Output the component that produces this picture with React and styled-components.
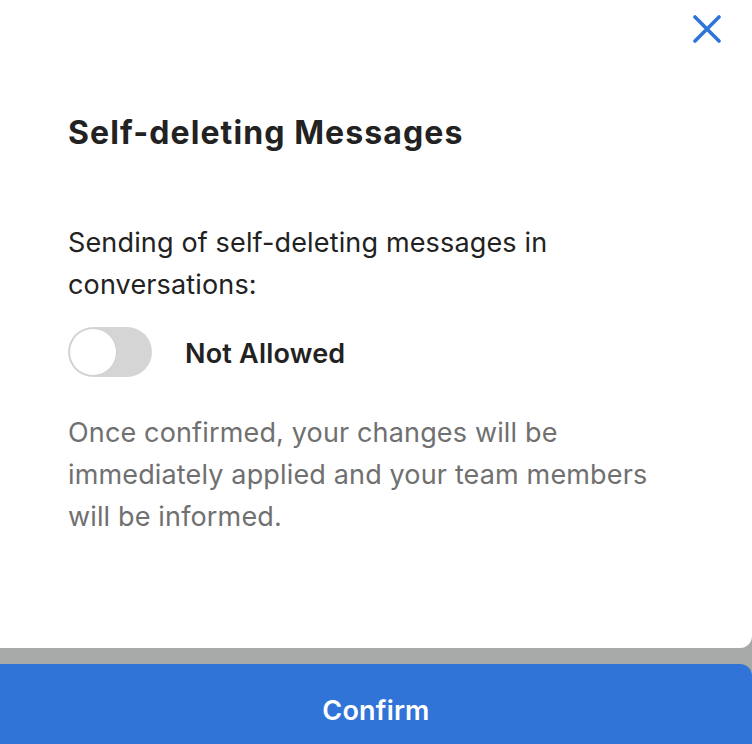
import React from "react";
import styled, { createGlobalStyle } from "styled-components";

const Global = createGlobalStyle`
  html, body { margin: 0; padding: 0; }
  body {
    background: #a7a9a8;
    overflow: hidden;
    font-family: Inter, "Noto Sans", sans-serif;
    font-optical-sizing: none;
    -webkit-font-smoothing: antialiased;
  }
`;

const Page = styled.div`
  width: 752px;
  height: 744px;
  display: flex;
  flex-direction: column;
  overflow: hidden;
`;

const Panel = styled.div`
  background: #ffffff;
  height: 648px;
  box-sizing: border-box;
  flex-shrink: 0;
  border-bottom-right-radius: 12px;
  padding: 15px 31px 0 68px;
  display: flex;
  flex-direction: column;
`;

const CloseRow = styled.div`
  display: flex;
  justify-content: flex-end;
`;

const CloseButton = styled.button`
  width: 28px;
  height: 28px;
  padding: 0;
  border: none;
  background: none;
  display: flex;
  cursor: pointer;
`;

const Title = styled.h1`
  margin: 71px 0 0;
  font-size: 32px;
  line-height: 38px;
  font-weight: 650;
  letter-spacing: 1.1px;
  color: #222222;
`;

const Body = styled.p`
  margin: ${(p) => p.$top}px 0 0;
  font-size: 27px;
  line-height: 42px;
  font-weight: 400;
  letter-spacing: 0.15px;
  color: ${(p) => (p.$muted ? "#707070" : "#222222")};
  max-width: 600px;
`;

const ToggleRow = styled.div`
  margin-top: 21px;
  display: flex;
  align-items: center;
  gap: 33px;
`;

const Track = styled.div`
  width: 84px;
  height: 50px;
  border-radius: 25px;
  background: #d5d5d5;
  box-sizing: border-box;
  padding: 1px;
  display: flex;
  align-items: center;
`;

const Knob = styled.div`
  width: 48px;
  height: 48px;
  border-radius: 50%;
  background: #ffffff;
  box-sizing: border-box;
  border: 1.5px solid #cfcfcf;
`;

const ToggleLabel = styled.span`
  font-size: 27px;
  line-height: 32px;
  font-weight: 600;
  letter-spacing: 0.2px;
  color: #222222;
  padding-top: 3px;
`;

const Gap = styled.div`
  height: 16px;
  flex-shrink: 0;
`;

const ConfirmButton = styled.button`
  flex-shrink: 0;
  height: 92px;
  border: none;
  background: #3074d8;
  color: #ffffff;
  font-family: Inter, "Noto Sans", sans-serif;
  font-optical-sizing: none;
  font-size: 27px;
  line-height: 32px;
  font-weight: 600;
  letter-spacing: 0.2px;
  border-top-right-radius: 12px;
  cursor: pointer;
  padding: 0 0 29px;
  display: flex;
  align-items: flex-end;
  justify-content: center;
`;

export default function App() {
  return (
    <Page>
      <Global />
      <Panel>
        <CloseRow>
          <CloseButton aria-label="Close">
            <svg width="28" height="28" viewBox="0 0 28 28">
              <path
                d="M2 2 L26 26 M26 2 L2 26"
                stroke="#2f74d8"
                strokeWidth="3.6"
                strokeLinecap="round"
              />
            </svg>
          </CloseButton>
        </CloseRow>
        <Title>Self-deleting Messages</Title>
        <Body $top={70}>Sending of self-deleting messages in conversations:</Body>
        <ToggleRow>
          <Track>
            <Knob />
          </Track>
          <ToggleLabel>Not Allowed</ToggleLabel>
        </ToggleRow>
        <Body $top={35} $muted>
          Once confirmed, your changes will be immediately applied and your team members will be informed.
        </Body>
      </Panel>
      <Gap />
      <ConfirmButton>Confirm</ConfirmButton>
    </Page>
  );
}
